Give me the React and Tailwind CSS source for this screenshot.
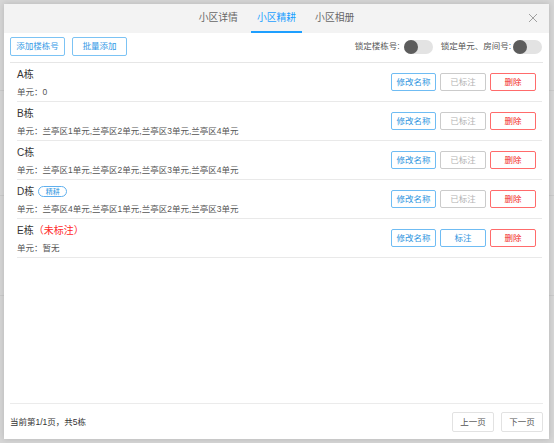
import { useState } from "react";

const buildings = [
  { name: "A栋", units: "0" },
  { name: "B栋", units: "兰亭区1单元,兰亭区2单元,兰亭区3单元,兰亭区4单元", marked: true },
  { name: "C栋", units: "兰亭区1单元,兰亭区2单元,兰亭区3单元,兰亭区4单元", marked: true },
  { name: "D栋", units: "兰亭区4单元,兰亭区1单元,兰亭区2单元,兰亭区3单元", marked: true, tag: "精耕" },
  { name: "E栋", units: "暂无", marked: false, unmarked: true },
];

function Toggle() {
  return (
    <div className="w-[29px] h-[14px] rounded-full bg-[#e3e3e3] flex items-center">
      <div className="w-[14px] h-[14px] rounded-full bg-[#5c5c5c]" />
    </div>
  );
}

function Row({ item }) {
  const markedBtn = item.unmarked
    ? "border-[#6fbcf3] text-[#2f95e0]"
    : "border-[#cbcbcb] text-[#b3b3b3]";
  return (
    <div className="h-[39px] ml-[7px] mr-[1px] border-b border-[#e9e9e9] flex items-center justify-between">
      <div className="flex flex-col self-start pt-[4px]">
        <div className="h-[14px] flex items-center text-[10px] text-[#333]">
          <span>{item.name}</span>
          {item.tag && (
            <span className="ml-[4px] h-[11px] w-[29px] rounded-full border border-[#5fb0ee] text-[#2f95e0] text-[7px] flex items-center justify-center leading-none">
              {item.tag}
            </span>
          )}
          {item.unmarked && <span className="text-[#ff2a2a]">（未标注）</span>}
        </div>
        <div className="h-[14px] mt-[4px] flex items-center text-[8.5px] text-[#555]">
          单元：{item.units}
        </div>
      </div>
      <div className="flex gap-[4px] pr-[6px] text-[8.5px]">
        <button className="w-[45px] h-[18px] border border-[#6fbcf3] text-[#2f95e0] rounded-[2px] bg-white">
          修改名称
        </button>
        <button className={`w-[46px] h-[18px] border rounded-[2px] bg-white ${markedBtn}`}>
          {item.unmarked ? "标注" : "已标注"}
        </button>
        <button className="w-[46px] h-[18px] border border-[#ff6b6b] text-[#f22a2a] rounded-[2px] bg-white">
          删除
        </button>
      </div>
    </div>
  );
}

export default function App() {
  const [tab, setTab] = useState(1);
  const tabs = ["小区详情", "小区精耕", "小区相册"];

  return (
    <div className="relative w-[554px] h-[443px] bg-[#d6d6d6] p-[4px] overflow-hidden font-['Liberation_Sans','Noto_Sans_CJK_SC',sans-serif]">
      {/* page under the overlay */}
      <div className="absolute left-0 right-0 top-[90px] h-px bg-[#cacaca]" />
      <div className="absolute left-0 right-0 top-[195px] h-px bg-[#cacaca]" />
      <div className="absolute left-0 right-0 top-[295px] h-px bg-[#cacaca]" />

      <div className="relative w-[545px] h-[435px] bg-white shadow-[0_0_6px_rgba(0,0,0,0.15)] flex flex-col">
        <div className="relative h-[29px] bg-[#f3f3f3] flex justify-center gap-[7px]">
          {tabs.map((t, i) => (
            <button
              key={t}
              onClick={() => setTab(i)}
              className={`h-full px-[6px] pt-[2px] text-[9.8px] border-b-2 ${
                tab === i
                  ? "text-[#1e9fff] border-[#1e9fff]"
                  : "text-[#666] border-transparent"
              }`}
            >
              {t}
            </button>
          ))}
          <svg
            className="absolute right-[11px] top-[9px]"
            width="10"
            height="10"
            viewBox="0 0 10 10"
          >
            <path d="M1 1L9 9M9 1L1 9" stroke="#a0a0a0" strokeWidth="1" />
          </svg>
        </div>

        <div className="flex-1 flex flex-col px-[6px]">
          <div className="pt-[4px] pb-[6px] border-b border-[#e6e6e6] flex items-center justify-between">
            <div className="flex gap-[7px] text-[8.5px]">
              <button className="w-[55px] h-[19px] border border-[#7cc3f4] text-[#3399e6] rounded-[2px]">
                添加楼栋号
              </button>
              <button className="w-[55px] h-[19px] border border-[#7cc3f4] text-[#3399e6] rounded-[2px]">
                批量添加
              </button>
            </div>
            <div className="flex items-center text-[8.5px] text-[#555]">
              <span>锁定楼栋号:</span>
              <div className="ml-[4px]">
                <Toggle />
              </div>
              <span className="ml-[8px]">锁定单元、房间号:</span>
              <div className="ml-[2px] mr-[1px]">
                <Toggle />
              </div>
            </div>
          </div>

          <div className="flex-1">
            {buildings.map((b) => (
              <Row key={b.name} item={b} />
            ))}
          </div>

          <div className="border-t border-[#ebebeb] pt-[8px] pb-[7px] flex items-center justify-between">
            <span className="text-[8.5px] text-[#333]">当前第1/1页，共5栋</span>
            <div className="flex gap-[7px] text-[8.5px] text-[#555]">
              <button className="w-[42px] h-[20px] border border-[#e2e2e2] rounded-[2px] bg-white">
                上一页
              </button>
              <button className="w-[42px] h-[20px] border border-[#e2e2e2] rounded-[2px] bg-white">
                下一页
              </button>
            </div>
          </div>
        </div>
      </div>
    </div>
  );
}
